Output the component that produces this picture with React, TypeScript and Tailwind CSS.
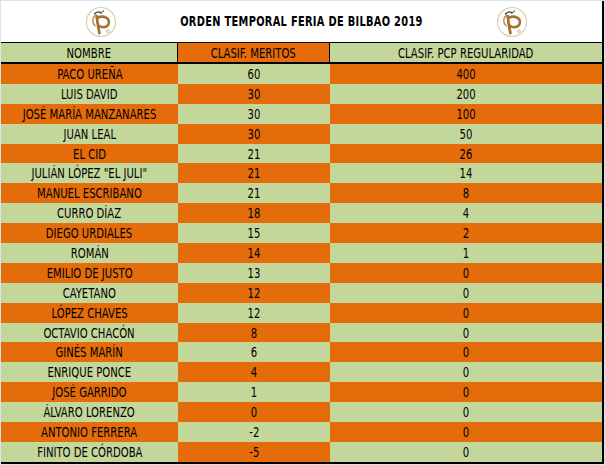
import React from 'react';

// ── Data ──────────────────────────────────────────────────────────────────────

const ROWS: [string, number, number][] = [
  ['PACO UREÑA', 60, 400],
  ['LUIS DAVID', 30, 200],
  ['JOSÉ MARÍA MANZANARES', 30, 100],
  ['JUAN LEAL', 30, 50],
  ['EL CID', 21, 26],
  ['JULIÁN LÓPEZ "EL JULI"', 21, 14],
  ['MANUEL ESCRIBANO', 21, 8],
  ['CURRO DÍAZ', 18, 4],
  ['DIEGO URDIALES', 15, 2],
  ['ROMÁN', 14, 1],
  ['EMILIO DE JUSTO', 13, 0],
  ['CAYETANO', 12, 0],
  ['LÓPEZ CHAVES', 12, 0],
  ['OCTAVIO CHACÓN', 8, 0],
  ['GINÉS MARÍN', 6, 0],
  ['ENRIQUE PONCE', 4, 0],
  ['JOSÉ GARRIDO', 1, 0],
  ['ÁLVARO LORENZO', 0, 0],
  ['ANTONIO FERRERA', -2, 0],
  ['FINITO DE CÓRDOBA', -5, 0],
];

const ORANGE = 'bg-[#e46c0a]';
const GREEN = 'bg-[#c4d79b]';

// ── Logo (circle with the PCP monogram) ───────────────────────────────────────

function Logo() {
  return (
    <svg width="32" height="32" viewBox="0 0 30 30">
      <circle cx="15" cy="15" r="13.6" fill="#fff" stroke="#dccdb0" strokeWidth="1.1" />
      {/* left curl */}
      <path d="M9.5 9 C6.5 11 6.5 16 9.5 18.5" stroke="#b98a4a" strokeWidth="1.4" fill="none" strokeLinecap="round" />
      {/* stem */}
      <path d="M11 9.5 C11.5 15 12.5 20 13.5 25.5" stroke="#a4722c" strokeWidth="2.6" fill="none" strokeLinecap="round" />
      {/* bowl */}
      <path d="M12 11 C17.5 8.5 24 11 22 17 C20.5 20.5 16 20.5 13 18.5" stroke="#a4722c" strokeWidth="2.4" fill="none" strokeLinecap="round" />
      {/* small figure on top */}
      <path d="M9 7.5 C10.5 5.5 13 5 15 6.5" stroke="#3c3c3c" strokeWidth="1.3" fill="none" strokeLinecap="round" />
      <path d="M15 6.5 L17.5 4.5" stroke="#555" strokeWidth="1" strokeLinecap="round" />
      <circle cx="21.5" cy="23.5" r="1.3" fill="none" stroke="#b59a6a" strokeWidth="0.6" />
    </svg>
  );
}

// Narrow caps text, close to the condensed face of the sheet
function Cell({ bg, children, border }: { bg: string; children: React.ReactNode; border?: boolean }) {
  return (
    <div className={`${bg} ${border ? 'border-r border-black' : ''} flex justify-center items-center min-w-0`}>
      <span className="inline-block whitespace-nowrap scale-x-80 text-[14px] leading-none">{children}</span>
    </div>
  );
}

// ── Page ──────────────────────────────────────────────────────────────────────

export default function App() {
  const font = { fontFamily: '"DejaVu Sans Condensed", "Liberation Sans", sans-serif' };

  return (
    <div className="w-[605px] h-[465px] overflow-hidden bg-[#dde3ec] pt-px pl-px text-black" style={font}>
      <div className="w-[603px] bg-white border-r-2 border-black">
        {/* Title band */}
        <div className="h-[41px] grid grid-cols-[200px_minmax(0,1fr)_200px] items-center">
          <div className="flex justify-center"><Logo /></div>
          <div className="flex justify-center min-w-0">
            <span className="inline-block whitespace-nowrap scale-x-78 text-[14px] font-bold tracking-[0.4px]">ORDEN TEMPORAL FERIA DE BILBAO 2019</span>
          </div>
          <div className="flex justify-center pl-[20px]"><Logo /></div>
        </div>

        {/* Column headers */}
        <div className="grid grid-cols-[177px_152px_minmax(0,1fr)] h-[22px] border-t border-b-2 border-black">
          <Cell bg={GREEN} border>NOMBRE</Cell>
          <Cell bg={ORANGE} border>CLASIF. MERITOS</Cell>
          <Cell bg={GREEN}>CLASIF. PCP REGULARIDAD</Cell>
        </div>

        {/* Rows */}
        <div className="border-b-2 border-black">
          {ROWS.map(([name, m, r], i) => {
            const a = i % 2 === 0 ? ORANGE : GREEN;
            const b = i % 2 === 0 ? GREEN : ORANGE;
            return (
              <div key={name} className="grid grid-cols-[177px_152px_minmax(0,1fr)] h-[19.9px]">
                <Cell bg={a}>{name}</Cell>
                <Cell bg={b}>{m}</Cell>
                <Cell bg={a}>{r}</Cell>
              </div>
            );
          })}
        </div>
      </div>
    </div>
  );
}
